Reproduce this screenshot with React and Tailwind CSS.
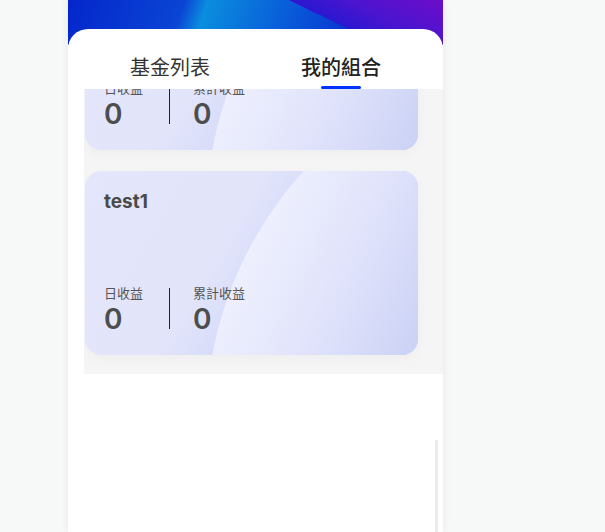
import React from 'react'

const cjk = { fontFamily: 'Inter, "Noto Sans CJK TC", "Noto Sans", sans-serif' }

function Card({ title }) {
  return (
    <div className="relative ml-px h-[184px] w-[333px] shrink-0 overflow-hidden rounded-[16px] bg-[linear-gradient(120deg,#e4e7fb_0%,#e2e5fa_40%,#d9ddf9_52%,#c5ccf4_72%)] shadow-[0_4px_12px_rgba(0,0,0,0.03)]">
      {/* decorative arc */}
      <div className="absolute left-[121px] top-[-122px] h-[748px] w-[748px] rounded-full bg-[linear-gradient(115deg,#eef0fe_12%,#e6e9fc_18%,#dde0fa_24%,#c9d0f5_33%)]" />
      <div className="relative flex h-full flex-col px-[19px] pt-[18px]">
        <div className="text-[19px] font-bold leading-[26px] text-[#4a4a4a]" style={cjk}>
          {title}
        </div>
        <div className="mt-auto mb-[22px] flex items-center">
          <div className="w-[65px]">
            <div className="mb-[3px] text-[13px] leading-[18px] text-[#555]" style={cjk}>日收益</div>
            <div className="text-[28px] font-semibold leading-[28px] text-[#4d4d4d]" style={cjk}>0</div>
          </div>
          <div className="h-[41px] w-px bg-[#222]" />
          <div className="pl-[23px]">
            <div className="mb-[3px] text-[13px] leading-[18px] text-[#555]" style={cjk}>累計收益</div>
            <div className="text-[28px] font-semibold leading-[28px] text-[#4d4d4d]" style={cjk}>0</div>
          </div>
        </div>
      </div>
    </div>
  )
}

export default function App() {
  return (
    <div className="h-[532px] w-[605px] overflow-hidden bg-[#f7f8f8]">
      <div className="relative ml-[68px] flex h-full w-[375px] flex-col bg-white shadow-[0_0_8px_rgba(0,0,0,0.07)]">
        {/* banner */}
        <div className="h-[45px] shrink-0 bg-[linear-gradient(26deg,transparent_67%,#2a18d1_67%,#4c14cf_80%,#6c0cc8_100%),linear-gradient(109deg,#0426cc_0%,#0a45d4_30%,#0a8ede_36%,#0a78dc_45%,#0856d8_60%,#0a3ad2_72%)]" />
        {/* tabs */}
        <div className="relative z-10 -mt-[16px] flex h-[60px] shrink-0 rounded-t-[20px] bg-white" style={cjk}>
          <div className="ml-[62px] pt-[25px] text-[20px] leading-[28px] text-[#333]">基金列表</div>
          <div className="ml-[91px] flex flex-col items-center pt-[25px]">
            <div className="text-[20px] font-medium leading-[28px] text-[#222]">我的組合</div>
            <div className="mt-[4px] h-[3px] w-[40px] rounded-full bg-[#0033ff]" />
          </div>
        </div>
        {/* list */}
        <div className="ml-[16px] h-[285px] shrink-0 overflow-hidden bg-[#f5f5f6]">
          <div className="-mt-[123px] flex flex-col gap-[21px]">
            <Card title="test0" />
            <Card title="test1" />
          </div>
        </div>
        <div className="absolute right-[5px] top-[440px] h-[92px] w-[3px] bg-[#ececec]" />
      </div>
    </div>
  )
}
